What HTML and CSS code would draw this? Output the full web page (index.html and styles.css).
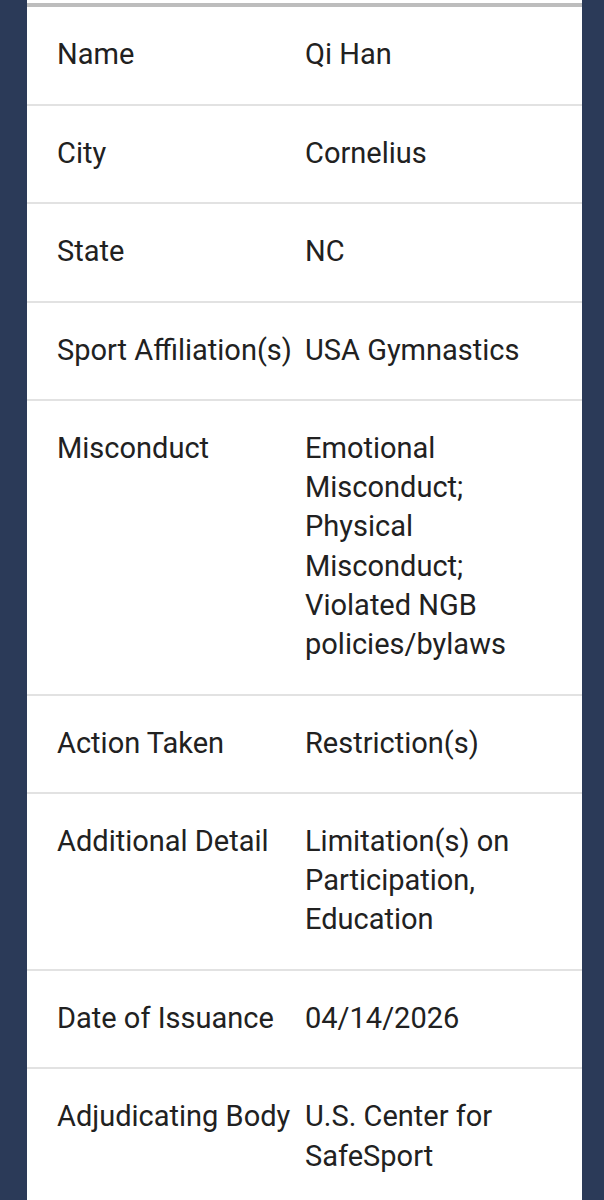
FILE: index.html
```html
<!DOCTYPE html>
<html lang="en">
<head>
  <meta charset="UTF-8">
  <meta name="viewport" content="width=device-width, initial-scale=1.0">
  <title>Sanction Detail</title>
  <link rel="stylesheet" href="styles.css">
</head>
<body>
<div id="detail-card">
  <div class="detail-list">
    <div class="detail-row">
      <div class="detail-label">Name</div>
      <div class="detail-value">Qi Han</div>
    </div>
    <div class="detail-row">
      <div class="detail-label">City</div>
      <div class="detail-value">Cornelius</div>
    </div>
    <div class="detail-row">
      <div class="detail-label">State</div>
      <div class="detail-value">NC</div>
    </div>
    <div class="detail-row">
      <div class="detail-label">Sport Affiliation(s)</div>
      <div class="detail-value">USA Gymnastics</div>
    </div>
    <div class="detail-row">
      <div class="detail-label">Misconduct</div>
      <div class="detail-value">Emotional Misconduct; Physical Misconduct; Violated NGB policies/bylaws</div>
    </div>
    <div class="detail-row">
      <div class="detail-label">Action Taken</div>
      <div class="detail-value">Restriction(s)</div>
    </div>
    <div class="detail-row">
      <div class="detail-label">Additional Detail</div>
      <div class="detail-value">Limitation(s) on Participation, Education</div>
    </div>
    <div class="detail-row">
      <div class="detail-label">Date of Issuance</div>
      <div class="detail-value">04/14/2026</div>
    </div>
    <div class="detail-row">
      <div class="detail-label">Adjudicating Body</div>
      <div class="detail-value">U.S. Center for SafeSport</div>
    </div>
  </div>
</div>
</body>
</html>
```

FILE: styles.css
```css
body {
  margin: 0;
  background-color: #2b3a58;
  font-family: Roboto, "Noto Sans", Arial, sans-serif;
  color: #212121;
  min-height: 100vh;
}

#detail-card {
  margin: 0 22px 0 27px;
  padding-top: 3px;
  background-color: #fff;
  min-height: 1200px;
}

.detail-list {
  border-top: 4px solid #bdbdbd;
}

.detail-row {
  display: grid;
  grid-template-columns: 248px 247px;
  padding: 28px 30px 29.3px;
  border-bottom: 2px solid #e2e2e2;
  font-size: 29px;
  line-height: 39.2px;
}

.detail-row:last-child {
  border-bottom: none;
}

.detail-label {
  white-space: nowrap;
}
```
